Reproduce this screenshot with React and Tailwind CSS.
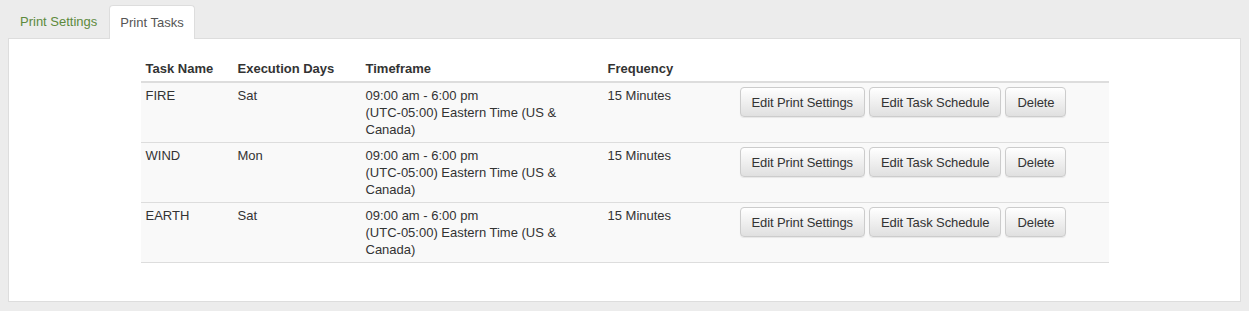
import React from "react";

const tasks = [
  { name: "FIRE", days: "Sat" },
  { name: "WIND", days: "Mon" },
  { name: "EARTH", days: "Sat" },
];

const btn =
  "h-[30px] px-[11px] rounded-[4px] border border-[#ccc] bg-gradient-to-b from-white to-[#e0e0e0] text-[13px] tracking-[-0.1px] text-[#333] shadow-[inset_0_1px_0_rgba(255,255,255,0.15),0_1px_1px_rgba(0,0,0,0.075)]";

const App = () => {
  return (
    <div
      className="w-[1249px] h-[311px] bg-[#ececec] px-[8px] pt-[4px] text-[13px] leading-[17px] text-[#333]"
      style={{ fontFamily: '"Liberation Sans", Arial, sans-serif' }}
    >
      {/* Tabs */}
      <div className="flex h-[34px] items-end">
        <div className="h-[33px] px-[12px] flex items-center text-[#5d8a3c]">
          Print Settings
        </div>
        <div className="h-[34px] px-[10px] flex items-center bg-white border border-[#ddd] border-b-0 rounded-t-[4px] -mb-px relative z-10 text-[#555]">
          Print Tasks
        </div>
      </div>

      {/* Panel */}
      <div className="w-[1233px] h-[264px] bg-white border border-[#ddd] pt-[17px]">
        <table className="w-[968px] mx-auto table-fixed border-collapse">
          <colgroup>
            <col className="w-[92px]" />
            <col className="w-[128px]" />
            <col className="w-[242px]" />
            <col className="w-[132px]" />
            <col />
          </colgroup>
          <thead>
            <tr className="border-b-2 border-[#ddd]">
              <th className="text-left font-bold px-[5px] py-[4px]">Task Name</th>
              <th className="text-left font-bold px-[5px] py-[4px]">Execution Days</th>
              <th className="text-left font-bold px-[5px] py-[4px]">Timeframe</th>
              <th className="text-left font-bold px-[5px] py-[4px]">Frequency</th>
              <th className="px-[5px] py-[4px]"></th>
            </tr>
          </thead>
          <tbody>
            {tasks.map((t) => (
              <tr key={t.name} className="bg-[#f9f9f9] border-b border-[#ddd] align-top">
                <td className="px-[5px] py-[4px]">{t.name}</td>
                <td className="px-[5px] py-[4px]">{t.days}</td>
                <td className="px-[5px] py-[4px] pr-[38px]">
                  09:00 am - 6:00 pm
                  <br />
                  (UTC-05:00) Eastern Time (US &amp; Canada)
                </td>
                <td className="px-[5px] py-[4px]">15 Minutes</td>
                <td className="px-[5px] py-[4px]">
                  <div className="flex gap-[4px]">
                    <button className={btn}>Edit Print Settings</button>
                    <button className={btn}>Edit Task Schedule</button>
                    <button className={btn}>Delete</button>
                  </div>
                </td>
              </tr>
            ))}
          </tbody>
        </table>
      </div>
    </div>
  );
};

export default App;
